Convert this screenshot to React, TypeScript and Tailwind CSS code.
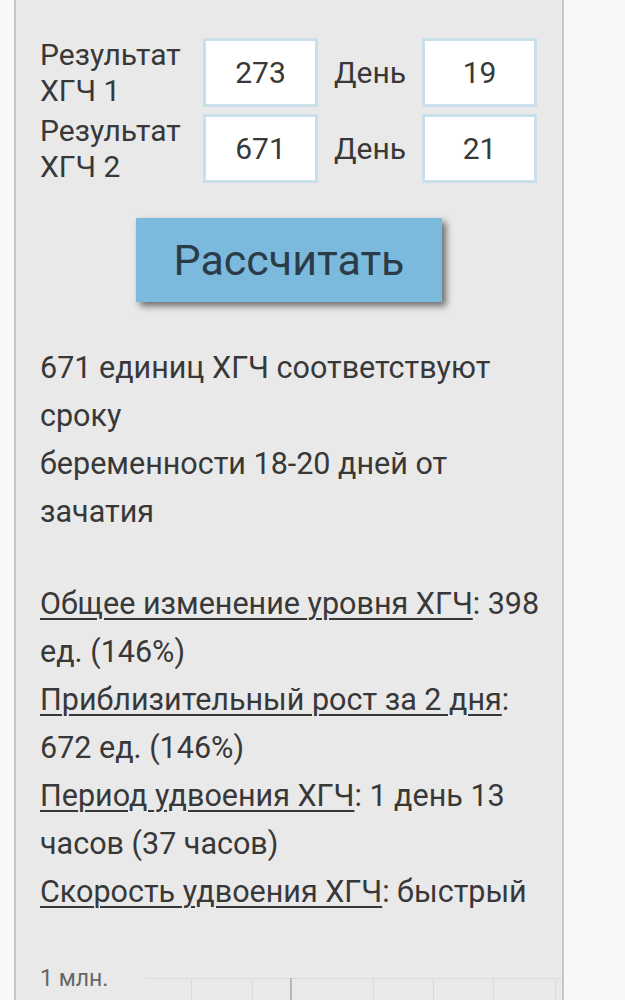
import React from 'react';

const FONT = { fontFamily: 'Roboto, "Noto Sans", sans-serif' };

function Field({ value }: { value: string }) {
  return (
    <div className="flex h-[69px] w-[115px] items-center justify-center border-[3px] border-[#c9dfea] bg-white text-[30px] text-[#383838]">
      {value}
    </div>
  );
}

function Row({ n, hcg, day }: { n: number; hcg: string; day: string }) {
  return (
    <div className="flex h-[69px] items-center">
      <div className="w-[163px] text-[30px] leading-[36px] text-[#383838]">
        Результат
        <br />
        ХГЧ {n}
      </div>
      <Field value={hcg} />
      <div className="w-[104px] text-center text-[30px] text-[#383838]">День</div>
      <Field value={day} />
    </div>
  );
}

function Term({ children }: { children: React.ReactNode }) {
  return <span className="underline decoration-[1.5px] underline-offset-[4px]">{children}</span>;
}

const GRID_X = [191, 252, 313, 373, 433, 493, 555];

export default function App() {
  return (
    <div className="min-h-screen bg-[#f8f8f8]" style={FONT}>
      <div className="ml-[14px] h-[1000px] w-[550px] overflow-hidden border-x-2 border-[#c6c6c6] bg-[#e9e9e9]">
        <div className="flex flex-col gap-[7px] pl-[24px] pt-[38px]">
          <Row n={1} hcg="273" day="19" />
          <Row n={2} hcg="671" day="21" />
        </div>

        <div className="mt-[35px] flex justify-center">
          <button className="h-[84px] w-[306px] bg-[#7bbadd] text-[43px] text-[#2b3c48] shadow-[4px_4px_7px_rgba(0,0,0,0.55)]">
            Рассчитать
          </button>
        </div>

        <div className="mt-[42px] w-[524px] pl-[24px] text-[30.5px] leading-[48px] text-[#383838]">
          <p>
            671 единиц ХГЧ соответствуют сроку
            <br />
            беременности 18-20 дней от зачатия
          </p>
          <p className="mt-[44px]">
            <Term>Общее изменение уровня ХГЧ</Term>: 398 ед. (146%)
            <br />
            <Term>Приблизительный рост за 2 дня</Term>: 672 ед. (146%)
            <br />
            <Term>Период удвоения ХГЧ</Term>: 1 день 13 часов (37 часов)
            <br />
            <Term>Скорость удвоения ХГЧ</Term>: быстрый
          </p>
        </div>

        <div className="relative mt-[54px] h-[40px]">
          <span className="absolute left-[24px] top-[-6px] text-[23px] leading-[30px] text-[#666]">1 млн.</span>
          <div className="absolute left-[130px] right-0 top-[8px] h-px bg-[#dadada]" />
          {GRID_X.map((x, i) => (
            <div
              key={x}
              className={`absolute top-[8px] bottom-0 ${i === 2 ? 'w-[2px] bg-[#b8b8b8]' : 'w-px bg-[#dadada]'}`}
              style={{ left: x - 16 - (i === 2 ? 23 : 0) }}
            />
          ))}
        </div>
      </div>
    </div>
  );
}
